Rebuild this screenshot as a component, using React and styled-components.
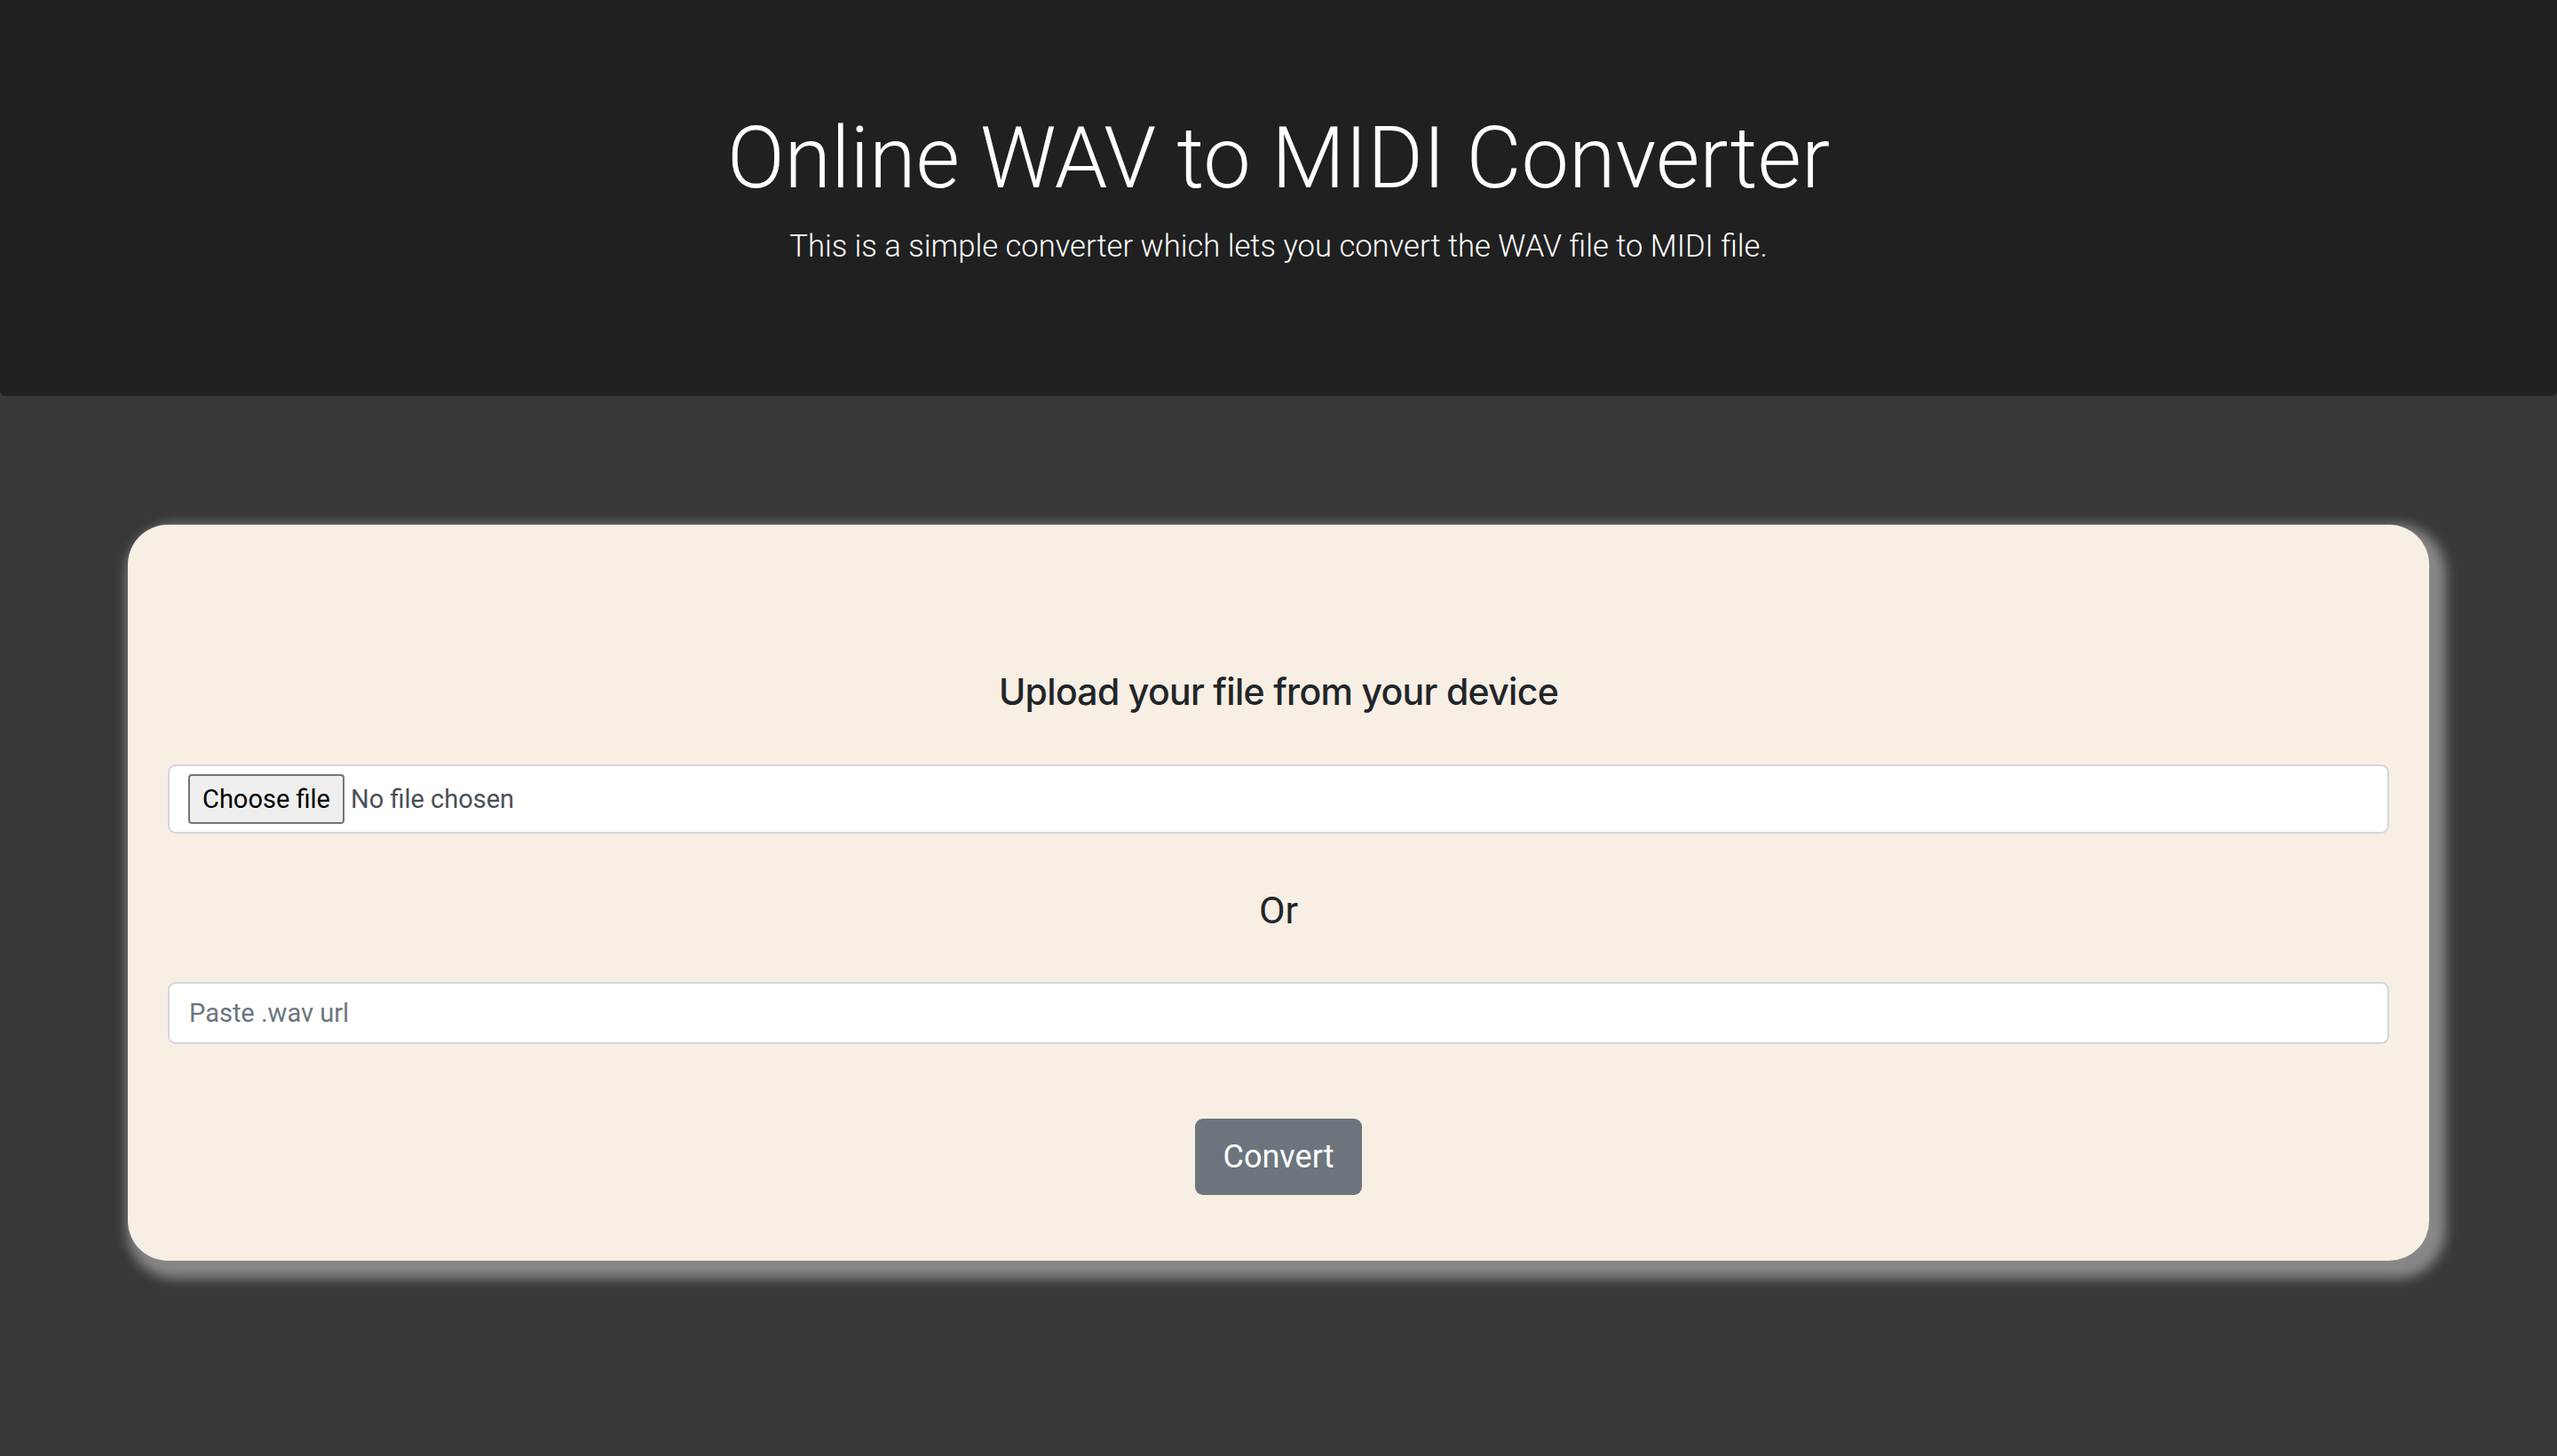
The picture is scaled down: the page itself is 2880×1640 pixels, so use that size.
import styled, { createGlobalStyle } from "styled-components";

const GlobalStyle = createGlobalStyle`
  body {
    margin: 0;
    background-color: #383838;
    font-family: "Roboto", "Liberation Sans", sans-serif;
    color: #212529;
  }
  * {
    box-sizing: border-box;
  }
`;

const App = () => {
  return (
    <>
      <GlobalStyle />
      <Wrapper>
        <Jumbotron>
          <Title>Online WAV to MIDI Converter</Title>
          <Lead>
            This is a simple converter which lets you convert the WAV file to
            MIDI file.
          </Lead>
        </Jumbotron>
        <Main>
          <Card>
            <Heading>Upload your file from your device</Heading>
            <FileBox>
              <HiddenInput type="file" accept=".wav" />
              <ChooseButton>Choose file</ChooseButton>
              <FileName>No file chosen</FileName>
            </FileBox>
            <OrText>Or</OrText>
            <UrlInput type="text" placeholder="Paste .wav url" />
            <ButtonRow>
              <ConvertButton>Convert</ConvertButton>
            </ButtonRow>
          </Card>
        </Main>
      </Wrapper>
    </>
  );
};

const Wrapper = styled.div`
  min-height: 100vh;
`;

const Jumbotron = styled.header`
  height: 446px;
  padding-top: 118px;
  background-color: #202020;
  border-radius: 0 0 6px 6px;
  text-align: center;
  color: #fff;
`;

const Title = styled.h1`
  margin: 0 0 12px 0;
  font-weight: 300;
  font-size: 95.5px;
  line-height: 120px;
`;

const Lead = styled.p`
  margin: 0;
  font-weight: 300;
  font-size: 34.6px;
  line-height: 54px;
`;

const Main = styled.main`
  padding: 145px 144px 100px;
`;

const Card = styled.section`
  height: 829px;
  padding: 158px 45px 0;
  background-color: #f7efe4;
  border-radius: 45px;
  box-shadow: 9px 10px 14px 10px #888;
`;

const Heading = styled.h4`
  margin: 0 0 52px 0;
  text-align: center;
  font-family: "Inter", sans-serif;
  font-weight: 500;
  font-size: 41px;
  letter-spacing: -0.7px;
  line-height: 60px;
  color: #212529;
`;

const FileBox = styled.label`
  display: flex;
  align-items: center;
  height: 78px;
  padding: 0 21px;
  background-color: #fff;
  border: 2px solid #d3d6dc;
  border-radius: 9px;
  cursor: pointer;
`;

const HiddenInput = styled.input`
  display: none;
`;

const ChooseButton = styled.span`
  display: flex;
  align-items: center;
  height: 56px;
  margin-right: 7px;
  padding: 0 14px;
  font-size: 29px;
  color: #000;
  background-color: #efefef;
  border: 2px solid #767676;
  border-radius: 4px;
`;

const FileName = styled.span`
  font-size: 29px;
  color: #495057;
`;

const OrText = styled.div`
  margin: 56px 0 51px;
  text-align: center;
  font-size: 43px;
  line-height: 60px;
  color: #212529;
`;

const UrlInput = styled.input`
  display: block;
  width: 100%;
  height: 70px;
  padding: 0 22px;
  font-family: "Roboto", sans-serif;
  font-size: 29px;
  color: #495057;
  background-color: #fff;
  border: 2px solid #d3d6dc;
  border-radius: 9px;
  outline: none;

  &::placeholder {
    color: #6c757d;
  }
`;

const ButtonRow = styled.div`
  display: flex;
  justify-content: center;
  margin-top: 84px;
`;

const ConvertButton = styled.button`
  width: 188px;
  height: 86px;
  font-family: "Roboto", sans-serif;
  font-size: 36px;
  color: #fff;
  background-color: #6c757d;
  border: none;
  border-radius: 9px;
`;

export default App;
